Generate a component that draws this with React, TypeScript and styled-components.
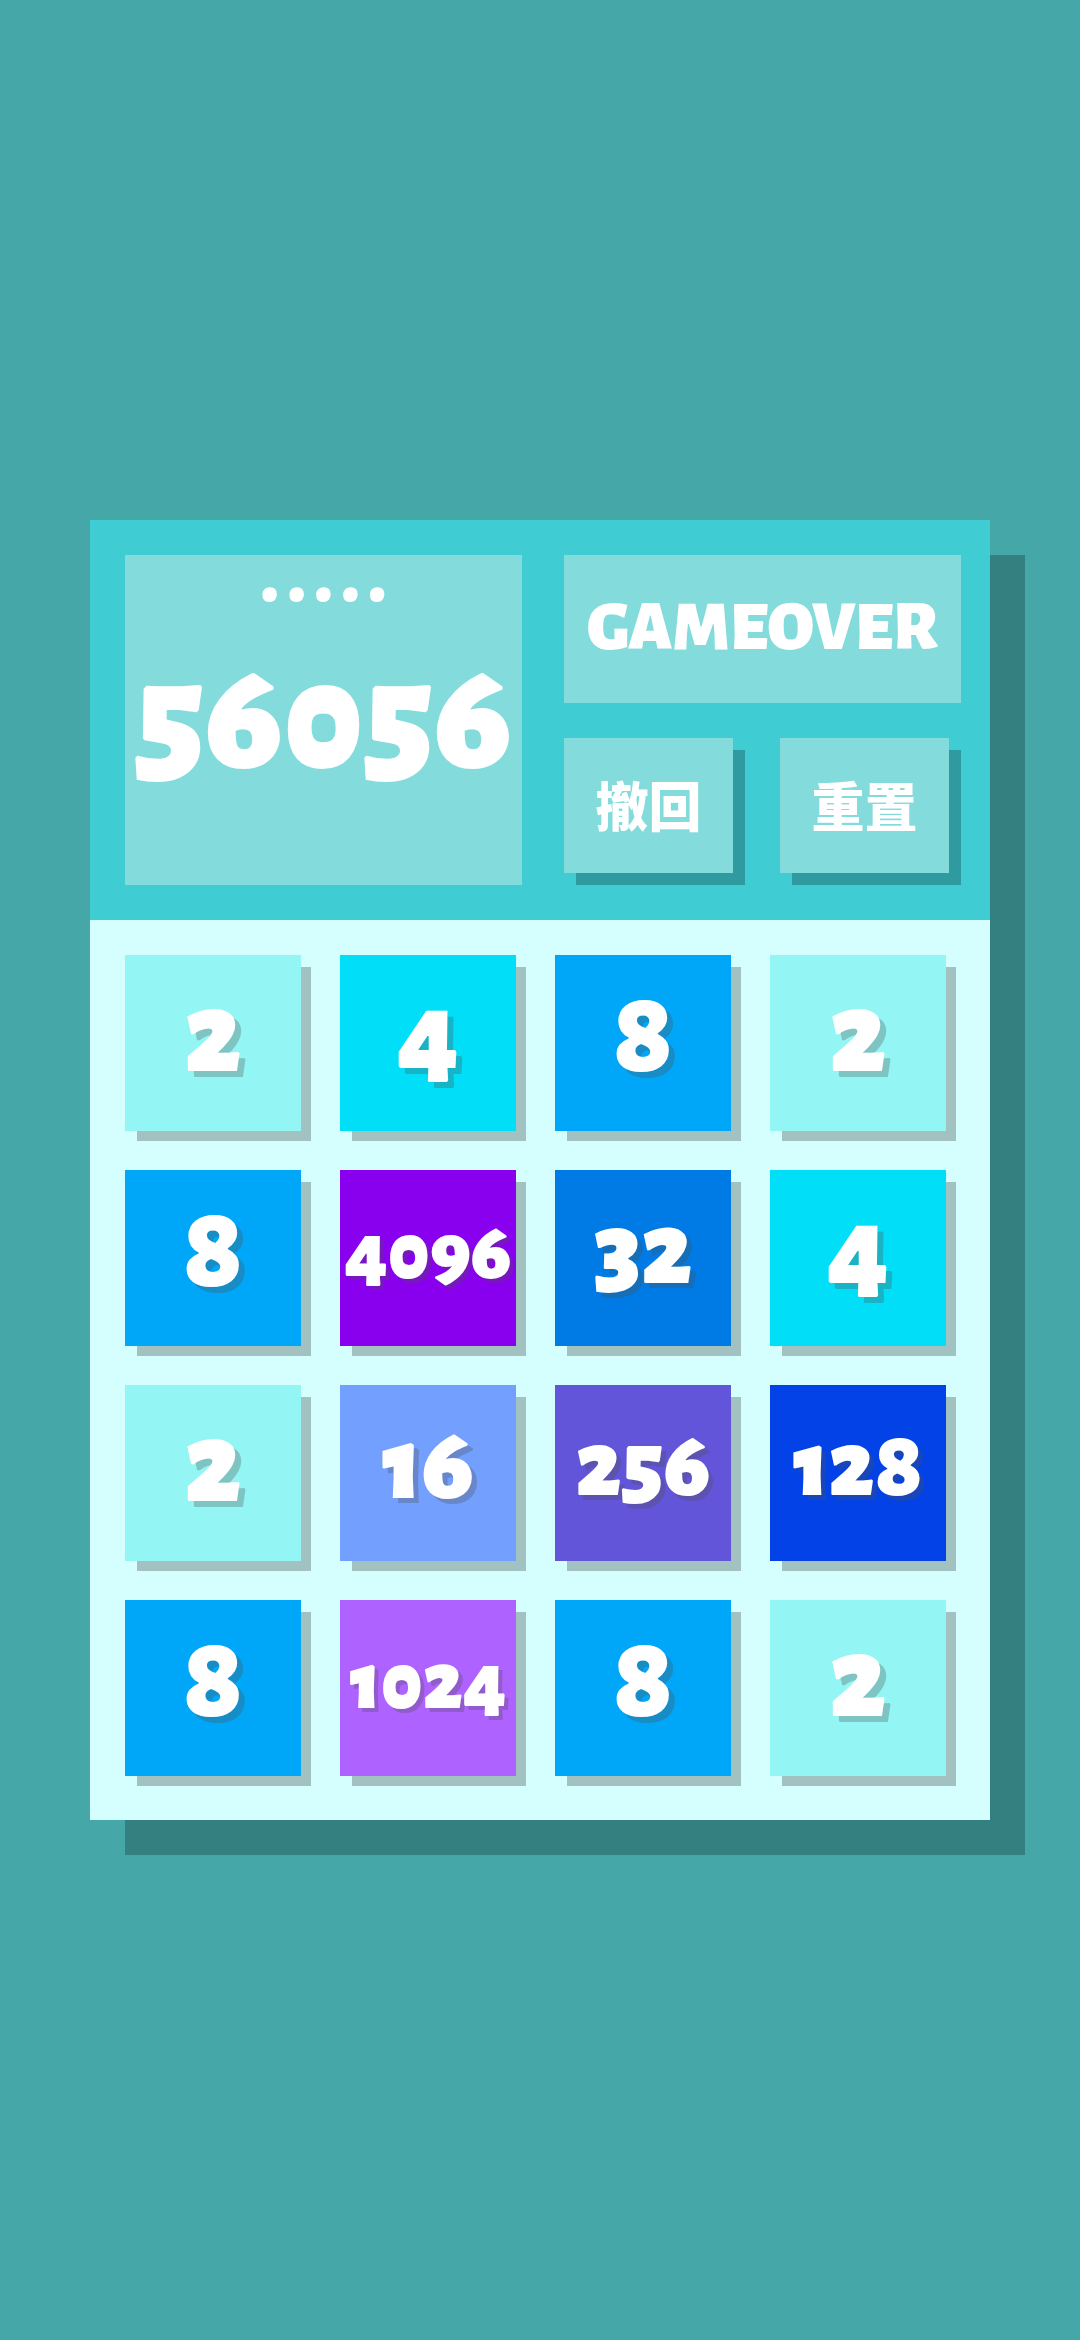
import React from "react";
import styled, { createGlobalStyle } from "styled-components";

const GlobalStyle = createGlobalStyle`
  *, *::before, *::after {
    box-sizing: border-box;
  }

  body {
    margin: 0;
    background: #45a7a8;
    color: #fff;
    font-family: "Alegreya Sans", "Noto Sans", "Noto Sans CJK SC", sans-serif;
    font-weight: 900;
    font-variant-numeric: oldstyle-nums;
  }
`;

const Page = styled.main`
  min-height: 100vh;
  padding: 35px 90px;
  display: flex;
  align-items: center;
  justify-content: center;
`;

const Game = styled.section`
  width: 100%;
  max-width: 900px;
  background: #d4fffe;
  box-shadow: 35px 35px 0 rgba(0, 0, 0, 0.24);
`;

const Header = styled.header`
  display: grid;
  grid-template-columns: 1fr 1fr;
  gap: 42px;
  padding: 35px 29px 35px 35px;
  background: #3fccd3;
`;

const ScorePanel = styled.div`
  height: 330px;
  display: flex;
  flex-direction: column;
  align-items: center;
  background: #84dbdc;
`;

const ScoreLabel = styled.span`
  font-size: 74px;
  line-height: 48px;
`;

const Score = styled.strong`
  font-size: 157px;
  font-weight: 900;
  line-height: 234px;
`;

const Side = styled.div`
  display: flex;
  flex-direction: column;
  gap: 35px;
`;

const Status = styled.h1`
  flex: 1;
  margin: 0;
  padding-bottom: 2px;
  display: flex;
  align-items: center;
  justify-content: center;
  background: #84dbdc;
  font-size: 71px;
  font-weight: 900;
  line-height: 84px;
`;

const Actions = styled.div`
  display: grid;
  grid-template-columns: 1fr 1fr;
  gap: 47px;
  padding: 0 12px 12px 0;
`;

const ActionButton = styled.button`
  height: 135px;
  padding: 0 0 4px;
  border: 0;
  background: #84dbdc;
  box-shadow: 12px 12px 0 rgba(0, 0, 0, 0.24);
  color: inherit;
  font-family: "Noto Sans CJK SC", sans-serif;
  font-size: 53px;
  font-weight: 900;
  line-height: 80px;
  cursor: pointer;
`;

const Board = styled.div`
  display: grid;
  grid-template-columns: repeat(4, 1fr);
  gap: 39px;
  padding: 35px 44px 44px 35px;
`;

const Tile = styled.div<{ $color: string; $size: number }>`
  aspect-ratio: 1;
  min-width: 0;
  display: flex;
  align-items: center;
  justify-content: center;
  padding-bottom: 0.12em;
  background: ${(p) => p.$color};
  box-shadow: 11px 11px 0 -1px rgba(0, 0, 0, 0.24);
  font-size: ${(p) => p.$size}px;
  line-height: 1;
  text-shadow: 0.05em 0.05em 0 rgba(80, 80, 80, 0.3);
`;

const TILE_COLORS: Record<number, string> = {
  2: "#93f6f4",
  4: "#00def8",
  8: "#00a7f8",
  16: "#739fff",
  32: "#007ae4",
  128: "#0242e6",
  256: "#6255da",
  1024: "#ae62ff",
  4096: "#8800ee",
};

const DIGIT_SIZES = [117, 105, 94, 82];

const TILES = [2, 4, 8, 2, 8, 4096, 32, 4, 2, 16, 256, 128, 8, 1024, 8, 2];

export default function App() {
  return (
    <Page>
      <GlobalStyle />
      <Game>
        <Header>
          <ScorePanel>
            <ScoreLabel>. . . . .</ScoreLabel>
            <Score>56056</Score>
          </ScorePanel>
          <Side>
            <Status>GAMEOVER</Status>
            <Actions>
              <ActionButton type="button">撤回</ActionButton>
              <ActionButton type="button">重置</ActionButton>
            </Actions>
          </Side>
        </Header>
        <Board>
          {TILES.map((value, index) => (
            <Tile
              key={index}
              $color={TILE_COLORS[value]}
              $size={DIGIT_SIZES[String(value).length - 1]}
            >
              {value}
            </Tile>
          ))}
        </Board>
      </Game>
    </Page>
  );
}
